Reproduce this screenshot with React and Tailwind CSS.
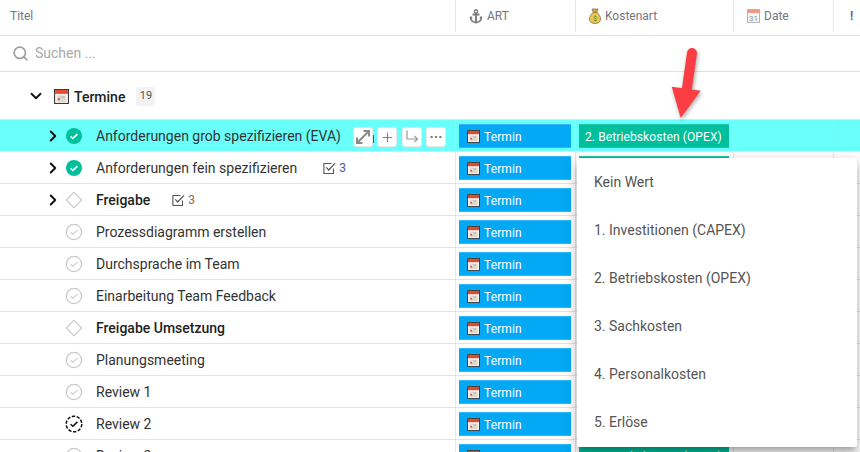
import React from 'react'
import { ChevronDown, ChevronRight, Search, Plus } from 'lucide-react'

const rows = [
  { title: 'Anforderungen grob spezifizieren (EVA)', status: 'done', expand: true, active: true, cost: true },
  { title: 'Anforderungen fein spezifizieren', status: 'done', expand: true, count: 3, countGap: 'ml-[26px]', cost: true, countColor: 'text-[#4a5a9a]' },
  { title: 'Freigabe', status: 'milestone', expand: true, bold: true, count: 3, countGap: 'ml-[22px]', countColor: 'text-[#8a6d52]' },
  { title: 'Prozessdiagramm erstellen', status: 'open' },
  { title: 'Durchsprache im Team', status: 'open' },
  { title: 'Einarbeitung Team Feedback', status: 'open' },
  { title: 'Freigabe Umsetzung', status: 'milestone', bold: true },
  { title: 'Planungsmeeting', status: 'open' },
  { title: 'Review 1', status: 'open' },
  { title: 'Review 2', status: 'dashed' },
  { title: 'Review 3', status: 'open', cost: true },
]

const options = ['Kein Wert', '1. Investitionen (CAPEX)', '2. Betriebskosten (OPEX)', '3. Sachkosten', '4. Personalkosten', '5. Erlöse']

function CalendarIcon({ size = 13 }) {
  return (
    <svg width={size} height={size} viewBox="0 0 14 14" className="shrink-0">
      <rect x="0.5" y="0.5" width="13" height="13" fill="#f4f1ec" stroke="#3a3a3a" />
      <rect x="1" y="1" width="12" height="3.5" fill="#e2492f" />
      <rect x="3" y="6" width="8" height="6" fill="#dcd8d2" />
      <rect x="3.5" y="8.5" width="2" height="2" fill="#e2604c" />
      <rect x="7" y="7" width="3" height="1" fill="#b5b0a8" />
    </svg>
  )
}

function AnchorIcon() {
  return (
    <svg width="14" height="15" viewBox="0 0 14 15" className="shrink-0">
      <circle cx="7" cy="2.4" r="1.6" fill="none" stroke="#7d7d7d" strokeWidth="1.4" />
      <path d="M3.5 5.5h7M7 4v10" stroke="#7d7d7d" strokeWidth="2" />
      <path d="M.8 8.5h2.4M10.8 8.5h2.4M1.6 8.5c.3 3 2.5 4.8 5.4 5.2 2.9-.4 5.1-2.2 5.4-5.2" fill="none" stroke="#7d7d7d" strokeWidth="1.8" />
    </svg>
  )
}

function MoneyBagIcon() {
  return (
    <svg width="12" height="16" viewBox="0 0 12 16" className="shrink-0">
      <path d="M3 1h6L7.8 4.2H4.2z" fill="#d9a93a" stroke="#7c6a3c" strokeWidth="0.7" />
      <path d="M4 4.5h4C10.2 6 11.5 8.5 11.5 11c0 3-2 4.5-5.5 4.5S.5 14 .5 11C.5 8.5 1.8 6 4 4.5z" fill="#f0c552" stroke="#7c6a3c" strokeWidth="0.7" />
      <text x="6" y="13" textAnchor="middle" fontSize="7" fill="#4e8a3c" fontFamily="Roboto, sans-serif">$</text>
    </svg>
  )
}

function DateIcon() {
  return (
    <svg width="13" height="14" viewBox="0 0 13 14" className="shrink-0">
      <rect x="0.5" y="0.5" width="12" height="13" fill="#f5f5f5" stroke="#b5b5b5" />
      <rect x="1" y="1" width="11" height="3" fill="#ec9a88" />
      <text x="6.5" y="12" textAnchor="middle" fontSize="8" fill="#8f8f8f" fontFamily="Roboto, sans-serif">31</text>
    </svg>
  )
}

function ChecklistIcon() {
  return (
    <svg width="13" height="13" viewBox="0 0 13 13" className="shrink-0">
      <path d="M10.5 6.5v5H.9V1.5h7.6" fill="none" stroke="#555" strokeWidth="1.1" />
      <path d="M3.3 5.4l2.4 2.6L12 1.3" fill="none" stroke="#555" strokeWidth="1.2" />
    </svg>
  )
}

function StatusIcon({ status }) {
  if (status === 'done') {
    return (
      <svg width="18" height="18" viewBox="0 0 18 18">
        <circle cx="9" cy="9" r="8" fill="#00bf9c" />
        <path d="M5.6 9.3l2.3 2 4.5-4.2" fill="none" stroke="#fff" strokeWidth="1.6" />
      </svg>
    )
  }
  if (status === 'milestone') {
    return (
      <svg width="18" height="18" viewBox="0 0 18 18">
        <path d="M9 1.3L16.7 9 9 16.7 1.3 9z" fill="none" stroke="#c8c8c8" strokeWidth="1.1" />
      </svg>
    )
  }
  if (status === 'dashed') {
    return (
      <svg width="18" height="18" viewBox="0 0 18 18">
        <circle cx="9" cy="9" r="7.8" fill="none" stroke="#111" strokeWidth="1.5" strokeDasharray="3.4 1.5" />
        <path d="M5.6 9.3l2.3 2 4.5-4.4" fill="none" stroke="#111" strokeWidth="1.5" />
      </svg>
    )
  }
  return (
    <svg width="18" height="18" viewBox="0 0 18 18">
      <circle cx="9" cy="9" r="7.6" fill="none" stroke="#c8c8c8" strokeWidth="1.2" />
      <path d="M5.6 9.3l2.3 2 4.5-4.2" fill="none" stroke="#c8c8c8" strokeWidth="1.1" />
    </svg>
  )
}

function HoverButton({ children, className }) {
  return (
    <span className={`flex h-5 w-5 items-center justify-center rounded-[3px] border border-[#e8e8e8] bg-white text-[#777] ${className}`}>
      {children}
    </span>
  )
}

function Row({ row }) {
  const line = row.active ? 'border-[#8ffdfa]' : 'border-[#e8e8e8]'
  return (
    <div className={`flex h-8 border-b ${row.active ? 'border-[#e0fdfc] bg-[#69fffb]' : 'border-[#e2e2e2] bg-white'}`}>
      <div className="relative flex w-[455px] shrink-0 items-center pl-[47px] pt-px">
        <span className="flex w-[11px] justify-center">
          {row.expand && <ChevronRight size={18} strokeWidth={2.6} className="shrink-0 text-[#111]" />}
        </span>
        <span className="ml-[7px] mr-[13px] flex w-[18px] justify-center">
          <StatusIcon status={row.status} />
        </span>
        <span className={`text-[14px] ${row.bold ? 'font-medium text-[#222]' : 'text-[#333]'}`}>{row.title}</span>
        {row.count && (
          <span className={`flex items-center gap-[3px] text-[12px] ${row.countGap}`}>
            <ChecklistIcon />
            <span className={row.countColor}>{row.count}</span>
          </span>
        )}
        {row.active && (
          <span className="absolute left-[353px] top-[7px] flex">
            <HoverButton>
              <svg width="18" height="18" viewBox="0 0 18 18">
                <path d="M3 15L15 3M9.5 3H15V8.5M3 9.5V15H8.5" fill="none" stroke="#8a8a8a" strokeWidth="2" />
              </svg>
            </HoverButton>
            <span className="flex w-[4px] items-end justify-start pb-[4px]">
              <span className="h-[8px] w-px bg-[#555]" />
            </span>
            <HoverButton><Plus size={15} strokeWidth={1.5} /></HoverButton>
            <HoverButton className="ml-[5px]">
              <svg width="16" height="16" viewBox="0 0 16 16">
                <path d="M3 1.5V10H13.5M10.5 7l3 3-3 3" fill="none" stroke="#9a9a9a" strokeWidth="1.2" />
              </svg>
            </HoverButton>
            <HoverButton className="ml-[4px]">
              <svg width="14" height="14" viewBox="0 0 14 14">
                <path d="M1.5 7h2.2M5.9 7h2.2M10.3 7h2.2" stroke="#808080" strokeWidth="2" />
              </svg>
            </HoverButton>
          </span>
        )}
      </div>
      <div className={`flex w-[120px] shrink-0 items-center border-l px-[3px] pt-px ${line}`}>
        <span className="flex h-6 w-[112px] items-center gap-[4px] border-y border-[#33b5f6] bg-[#03a9f4] pl-2 text-[12px] tracking-[0.1px] text-white">
          <CalendarIcon />
          <span className="pt-px">Termin</span>
        </span>
      </div>
      <div className={`flex w-[158px] shrink-0 items-center border-l px-[3px] pt-px ${line}`}>
        {row.cost && (
          <span className="flex h-6 w-[150px] items-center border-y border-[#1fc8a8] bg-[#00bf9c] pl-[6px] pt-px text-[12px] tracking-[0.1px] text-white">
            2. Betriebskosten (OPEX)
          </span>
        )}
      </div>
      <div className={`w-[100px] shrink-0 border-l ${line}`} />
      <div className={`flex-1 border-l ${line}`} />
    </div>
  )
}

export default function App() {
  return (
    <div className="relative h-[452px] w-[860px] overflow-hidden bg-white font-['Roboto',sans-serif]">
      {/* column header */}
      <div className="flex h-9 border-b border-[#e0e0e0] pb-[3px] text-[12px] text-[#75757f]">
        <div className="flex w-[455px] shrink-0 items-center pl-[10px]">Titel</div>
        <div className="flex w-[120px] shrink-0 items-center gap-[4px] border-l border-[#e8e8e8] pl-[13px]">
          <AnchorIcon />
          ART
        </div>
        <div className="flex w-[158px] shrink-0 items-center gap-[4px] border-l border-[#e8e8e8] pl-[13px]">
          <MoneyBagIcon />
          Kostenart
        </div>
        <div className="flex w-[100px] shrink-0 items-center gap-[4px] border-l border-[#e8e8e8] pl-[13px]">
          <DateIcon />
          Date
        </div>
        <div className="flex flex-1 items-center border-l border-[#e8e8e8] pl-[16px] font-bold text-[#5a6a9a]">!</div>
      </div>

      {/* search */}
      <div className="flex h-9 items-center gap-[6px] border-b border-[#e0e0e0] pl-[12px] text-[14px] text-[#a8a8a8]">
        <Search size={17} strokeWidth={2.4} className="text-[#a0a0a0]" />
        Suchen ...
      </div>

      {/* group */}
      <div className="flex h-12 items-center border-b border-[#e4e4e4] pl-[27px] pt-[2px]">
        <ChevronDown size={18} strokeWidth={2.4} className="-mt-[2px] text-[#111]" />
        <span className="ml-[9px] mr-[5px]"><CalendarIcon size={15} /></span>
        <span className="pt-px text-[14px] font-medium text-[#222]">Termine</span>
        <span className="ml-[11px] flex h-[19px] w-[19px] items-center justify-center rounded-[3px] bg-[#f2f2f2] text-[11px] text-[#555]">19</span>
      </div>

      {rows.map((row) => (
        <Row key={row.title} row={row} />
      ))}

      {/* dropdown menu */}
      <div className="absolute left-[577px] top-[158px] w-[280px] rounded-[2px] bg-white pb-px shadow-[0_5px_5px_-3px_rgba(0,0,0,0.2),0_8px_10px_1px_rgba(0,0,0,0.14),0_3px_14px_2px_rgba(0,0,0,0.12)]">
        {options.map((option) => (
          <div key={option} className="flex h-12 items-center px-[17px] text-[14px] text-[#555]">
            {option}
          </div>
        ))}
      </div>

      {/* red annotation arrow */}
      <svg width="50" height="80" viewBox="0 0 50 80" className="absolute left-[665px] top-[42px] drop-shadow-[1px_2px_2px_rgba(0,0,0,0.35)]">
        <path d="M27 11L22 46" stroke="#fa3e44" strokeWidth="10" strokeLinecap="round" />
        <path d="M6.7 44.7L35.7 48.7 15.7 76z" fill="#fa3e44" />
      </svg>
    </div>
  )
}
